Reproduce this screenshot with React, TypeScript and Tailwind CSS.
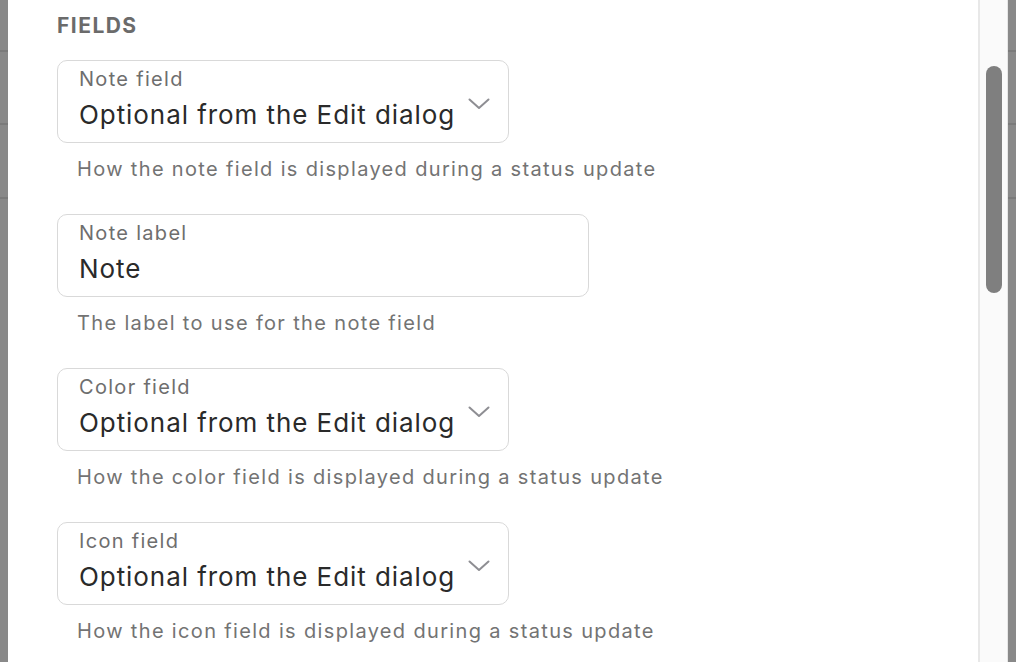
const FONT = { fontFamily: "Inter, 'Noto Sans', sans-serif" };

type Field = {
  label: string;
  value: string;
  help: string;
  select: boolean;
};

const fields: Field[] = [
  {
    label: "Note field",
    value: "Optional from the Edit dialog",
    help: "How the note field is displayed during a status update",
    select: true,
  },
  {
    label: "Note label",
    value: "Note",
    help: "The label to use for the note field",
    select: false,
  },
  {
    label: "Color field",
    value: "Optional from the Edit dialog",
    help: "How the color field is displayed during a status update",
    select: true,
  },
  {
    label: "Icon field",
    value: "Optional from the Edit dialog",
    help: "How the icon field is displayed during a status update",
    select: true,
  },
];

const Chevron = () => (
  <svg width="22" height="12" viewBox="0 0 22 12" fill="none" className="mt-[37px] shrink-0">
    <path d="M1.5 1.5 L11 10 L20.5 1.5" stroke="#8e8e93" strokeWidth="2" strokeLinecap="round" strokeLinejoin="round" />
  </svg>
);

const BackdropStrip = () => (
  <div className="flex w-[8px] shrink-0 flex-col bg-[#898989]">
    <div className="h-[52px] border-b-2 border-[#7b7b7b]" />
    <div className="h-[73px] border-b-2 border-[#7b7b7b]" />
    <div className="h-[74px] border-b-2 border-[#7b7b7b]" />
    <div className="flex-1" />
  </div>
);

const FieldBox = ({ field }: { field: Field }) => (
  <div className="flex flex-col">
    <div
      className={`flex h-[83px] items-start rounded-[10px] border border-[#d9d9d9] pl-[21px] pr-[18px] ${
        field.select ? "w-[452px]" : "w-[532px]"
      }`}
    >
      <div className="flex flex-1 flex-col pt-[6px]">
        <span className="text-[20px] leading-[24px] tracking-[0.065em] text-[#6e6e6e]">{field.label}</span>
        <span className="mt-[8px] text-[26px] leading-[32px] tracking-[0.036em] text-[#2a2a2a]">{field.value}</span>
      </div>
      {field.select && <Chevron />}
    </div>
    <p className="ml-[20px] mt-[14px] text-[20px] leading-[24px] tracking-[0.067em] text-[#737373]">{field.help}</p>
  </div>
);

export default function App() {
  return (
    <div className="flex h-[662px] w-[1016px] overflow-hidden bg-[#898989]" style={FONT}>
      <BackdropStrip />
      <div className="flex flex-1 flex-col bg-white pl-[49px]">
        <h2 className="mt-[14px] text-[21px] font-bold uppercase leading-[24px] tracking-[0.07em] text-[#6b6b6b]">
          Fields
        </h2>
        <div className="mt-[22px] flex flex-col gap-[33px]">
          {fields.map((f) => (
            <FieldBox key={f.label} field={f} />
          ))}
        </div>
      </div>
      <div className="flex w-[30px] shrink-0 border-l-2 border-[#e8e8e8] bg-[#fafafa]">
        <div className="flex flex-1 justify-center pt-[66px]">
          <div className="h-[227px] w-[16px] rounded-full bg-[#7f7f7f]" />
        </div>
        <div className="w-px bg-[#e6e6e6]" />
      </div>
      <BackdropStrip />
    </div>
  );
}
